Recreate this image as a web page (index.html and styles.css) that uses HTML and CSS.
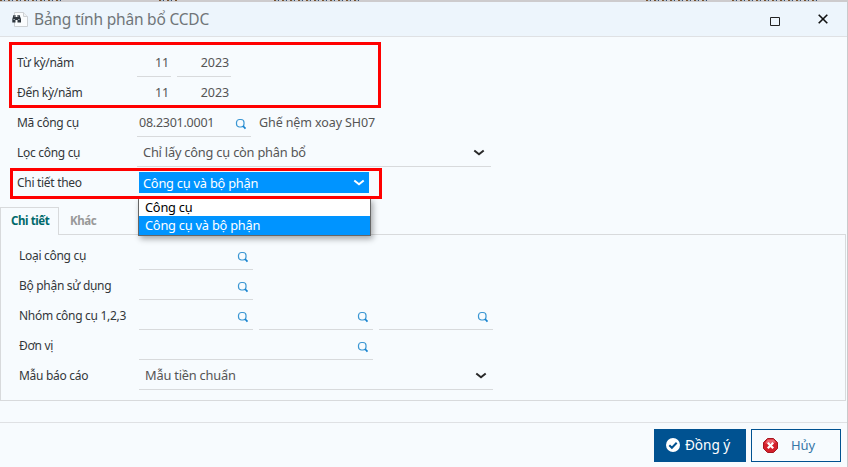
FILE: index.html
```html
<!DOCTYPE html>
<html lang="vi">
<head>
<meta charset="utf-8">
<title>Bảng tính phân bổ CCDC</title>
<link rel="stylesheet" href="styles.css">
</head>
<body>
<svg class="defs" width="0" height="0"><defs>
<symbol id="search" viewBox="0 0 12 12"><rect x="1.500" y="1.500" width="7.500" height="7.500" rx="3" fill="none" stroke="#3b97d3" stroke-width="1.200"/><path d="M8 8l2.500 2.700" stroke="#1683d0" stroke-width="1.700"/></symbol>
<symbol id="chevron" viewBox="0 0 12 8"><path d="M1.300 1.500L6 5.300l4.700-3.800" fill="none" stroke="currentColor" stroke-width="2"/></symbol>
</defs></svg>
<div class="backdrop"><i class="s1"></i><i class="s2"></i><i class="s3"></i><i class="s4"></i><i class="s5"></i></div>
<main class="dialog">
  <header class="titlebar">
    <svg class="appicon" width="17" height="17" viewBox="0 0 17 17"><path d="M2.500 1.500h9l4 4v10h-13z" fill="#fafcfd" stroke="#cdd1d4"/><path d="M11.500 1.500v4h4" fill="#eef0f2" stroke="#cdd1d4"/><path d="M1.500 4h2v2h2V4h2L9 8v3.500H5.500V9h-2v2.500H.3V8z" fill="#30383f"/><path d="M1.300 8.500h1.700M6 8.500h1.700M2 5h1M6 5h1" stroke="#95a2ad"/></svg>
    <h1>Bảng tính phân bổ CCDC</h1>
    <svg class="max" width="10" height="9" viewBox="0 0 10 9"><path d="M.5.5h9v8h-9z" fill="none" stroke="#222"/></svg>
    <svg class="close" width="10" height="10" viewBox="0 0 10 10"><path d="M.7.700l8.600 8.600M9.300.700L.7 9.300" stroke="#111" stroke-width="1.600"/></svg>
  </header>
  <section class="form">
    <div class="row"><label>Từ kỳ/năm</label><div class="fld w34 num">11</div><div class="fld w54 num">2023</div></div>
    <div class="row"><label>Đến kỳ/năm</label><div class="fld w34 num">11</div><div class="fld w54 num">2023</div></div>
    <div class="row"><label>Mã công cụ</label><div class="fld w114 code"><span>08.2301.0001</span><svg class="search"><use href="#search"/></svg></div><span class="desc">Ghế nệm xoay SH07</span></div>
    <div class="row"><label>Lọc công cụ</label><div class="fld w354 sel"><span>Chỉ lấy công cụ còn phân bổ</span><svg class="chev"><use href="#chevron"/></svg></div></div>
    <div class="row"><label>Chi tiết theo</label><div class="picked"><span>Công cụ và bộ phận</span><svg class="chev"><use href="#chevron"/></svg></div></div>
    <div class="menu"><div>Công cụ</div><div class="on">Công cụ và bộ phận</div></div>
    <div class="mark m1"></div><div class="mark m2"></div>
  </section>
  <nav class="tabs"><span class="tab active">Chi tiết</span><span class="tab">Khác</span></nav>
  <section class="panel">
    <div class="row"><label>Loại công cụ</label><div class="fld w114"><svg class="search"><use href="#search"/></svg></div></div>
    <div class="row"><label>Bộ phận sử dụng</label><div class="fld w114"><svg class="search"><use href="#search"/></svg></div></div>
    <div class="row"><label>Nhóm công cụ 1,2,3</label><div class="fld w114"><svg class="search"><use href="#search"/></svg></div><div class="fld w114"><svg class="search"><use href="#search"/></svg></div><div class="fld w114"><svg class="search"><use href="#search"/></svg></div></div>
    <div class="row"><label>Đơn vị</label><div class="fld w234"><svg class="search"><use href="#search"/></svg></div></div>
    <div class="row"><label>Mẫu báo cáo</label><div class="fld w354 sel"><span>Mẫu tiền chuẩn</span><svg class="chev"><use href="#chevron"/></svg></div></div>
  </section>
  <footer class="footer">
    <button class="ok"><svg width="14" height="14" viewBox="0 0 14 14"><circle cx="7" cy="7" r="7" fill="#fff"/><path d="M3.300 7.200l2.600 2.600 4.800-5" fill="none" stroke="#005291" stroke-width="2"/></svg><span>Đồng ý</span></button>
    <button class="cancel"><svg width="15" height="15" viewBox="0 0 15 15"><path d="M4.500.5h6l4 4v6l-4 4h-6l-4-4v-6z" fill="#d3202b" stroke="#a51720"/><path d="M4.500 1.500h6l2.500 3-11 1z" fill="#ee6670"/><path d="M4.800 4.800l5.400 5.400M10.200 4.800l-5.400 5.400" stroke="#fff" stroke-width="2.300"/></svg><span>Hủy</span></button>
  </footer>
</main>
</body>
</html>
```
FILE: styles.css
```css
* { box-sizing: border-box; }
body { margin: 0; width: 848px; height: 467px; overflow: hidden; background: #f7fbfe; font: 12px/18px "Noto Sans", "Open Sans", sans-serif; color: #333; }
.defs { position: absolute; }
.backdrop { height: 2px; background: #cdcbcd; display: flex; }
.backdrop i { height: 1px; background: repeating-linear-gradient(90deg, #76502a 0 2px, #aebcc8 2px 4px, #334b6b 4px 5px, #cdcbcd 5px 8px); }
.s1 { width: 61px; }
.s2 { width: 18px; margin-left: 98px; }
.s3 { width: 86px; margin-left: 97px; }
.s4 { width: 62px; margin-left: 286px; }
.s5 { width: 87px; margin-left: 24px; }
.dialog { height: 465px; border-right: 1px solid #c9c9cb; display: flex; flex-direction: column; }
.titlebar { height: 35px; flex: none; background: #edf5fc; border-bottom: 1px solid #dfe1e4; display: flex; align-items: center; padding-left: 12px; }
h1 { margin: 0 0 0 5px; width: 736px; font-size: 15.500px; font-weight: 400; line-height: 20px; letter-spacing: -.2px; color: #707579; white-space: nowrap; }
.max { margin-top: 4px; }
.close { margin-left: 38px; }
.form { position: relative; height: 170px; flex: none; padding: 10px 0 0 17px; }
.row { display: flex; height: 30px; gap: 6px; white-space: nowrap; }
label { width: 114px; padding-top: 7px; color: #33373a; letter-spacing: -.3px; }
.fld { height: 30px; border-bottom: 1px solid #d8dadc; display: flex; align-items: flex-start; padding-top: 7px; color: #555; }
.w34 { width: 34px; } .w54 { width: 54px; } .w114 { width: 114px; } .w234 { width: 234px; } .w354 { width: 354px; }
.num { justify-content: flex-end; padding-right: 2px; font-size: 12.500px; letter-spacing: -.1px; }
.code { padding-left: 2px; font-size: 12.500px; letter-spacing: -.25px; }
.desc { padding: 7px 0 0 2px; color: #555; font-size: 12.500px; letter-spacing: -.1px; }
.search { width: 12px; height: 12px; flex: none; margin: 4px 4px 0 auto; }
.chev { width: 12px; height: 8px; flex: none; margin: 5px 6px 0 auto; color: #292929; }
.sel { padding: 6px 0 0 6px; font-size: 12.800px; letter-spacing: -.2px; }
.sel .chev { margin-top: 6px; }
.picked { width: 230px; height: 21px; margin: 5px 0 0 2px; padding: 2px 4px 0; display: flex; background: #0094ff; color: #fff; font-size: 12.800px; letter-spacing: -.22px; }
.picked .chev { color: #fff; margin: 5px 0 0 auto; }
.menu { position: absolute; z-index: 2; left: 138px; top: 161px; width: 233px; height: 38px; border: 1px solid #666; background: #fff; color: #000; box-shadow: 2px 3px 6px #0005; line-height: 17px; font-size: 12.800px; letter-spacing: -.22px; }
.menu div { height: 17px; padding-left: 6px; white-space: nowrap; }
.menu .on { height: 19px; line-height: 18px; background: #0094ff; color: #fff; }
.mark { position: absolute; z-index: 3; border: 3px solid #f00; }
.m1 { left: 9px; top: 5px; width: 372px; height: 66px; }
.m2 { left: 10px; top: 131px; width: 372px; height: 31px; }
.tabs { height: 28px; flex: none; display: flex; margin-right: 1px; border-bottom: 1px solid #d8dadc; font-size: 11.500px; font-weight: 700; color: #999; }
.tab { height: 28px; padding: 5px 11px 0; white-space: nowrap; letter-spacing: -.4px; }
.active { width: 59px; border: 1px solid #d8dadc; border-bottom: 0; background: #f7fbfe; color: #00696b; padding: 4px 10px 0; }
.panel { height: 166px; flex: none; border: 1px solid #d8dadc; border-top: 0; padding: 5px 0 0 18px; margin-right: 1px; }
.footer { height: 45px; margin-top: 21px; border-top: 1px solid #dfe1e4; display: flex; justify-content: flex-end; gap: 5px; padding: 6px 6px 0 0; }
button { height: 33px; border: 1px solid #005291; border-radius: 0; display: flex; align-items: center; padding: 0 0 1px; font: 13.600px/18px "Noto Sans", sans-serif; white-space: nowrap; letter-spacing: -.05px; }
.ok { width: 92px; padding-left: 11px; gap: 5px; background: #005291; color: #fff; }
.cancel { width: 90px; padding-left: 11px; gap: 13px; background: #f7fbfe; color: #3576a6; }
.cancel span { font-size: 13px; }
```
